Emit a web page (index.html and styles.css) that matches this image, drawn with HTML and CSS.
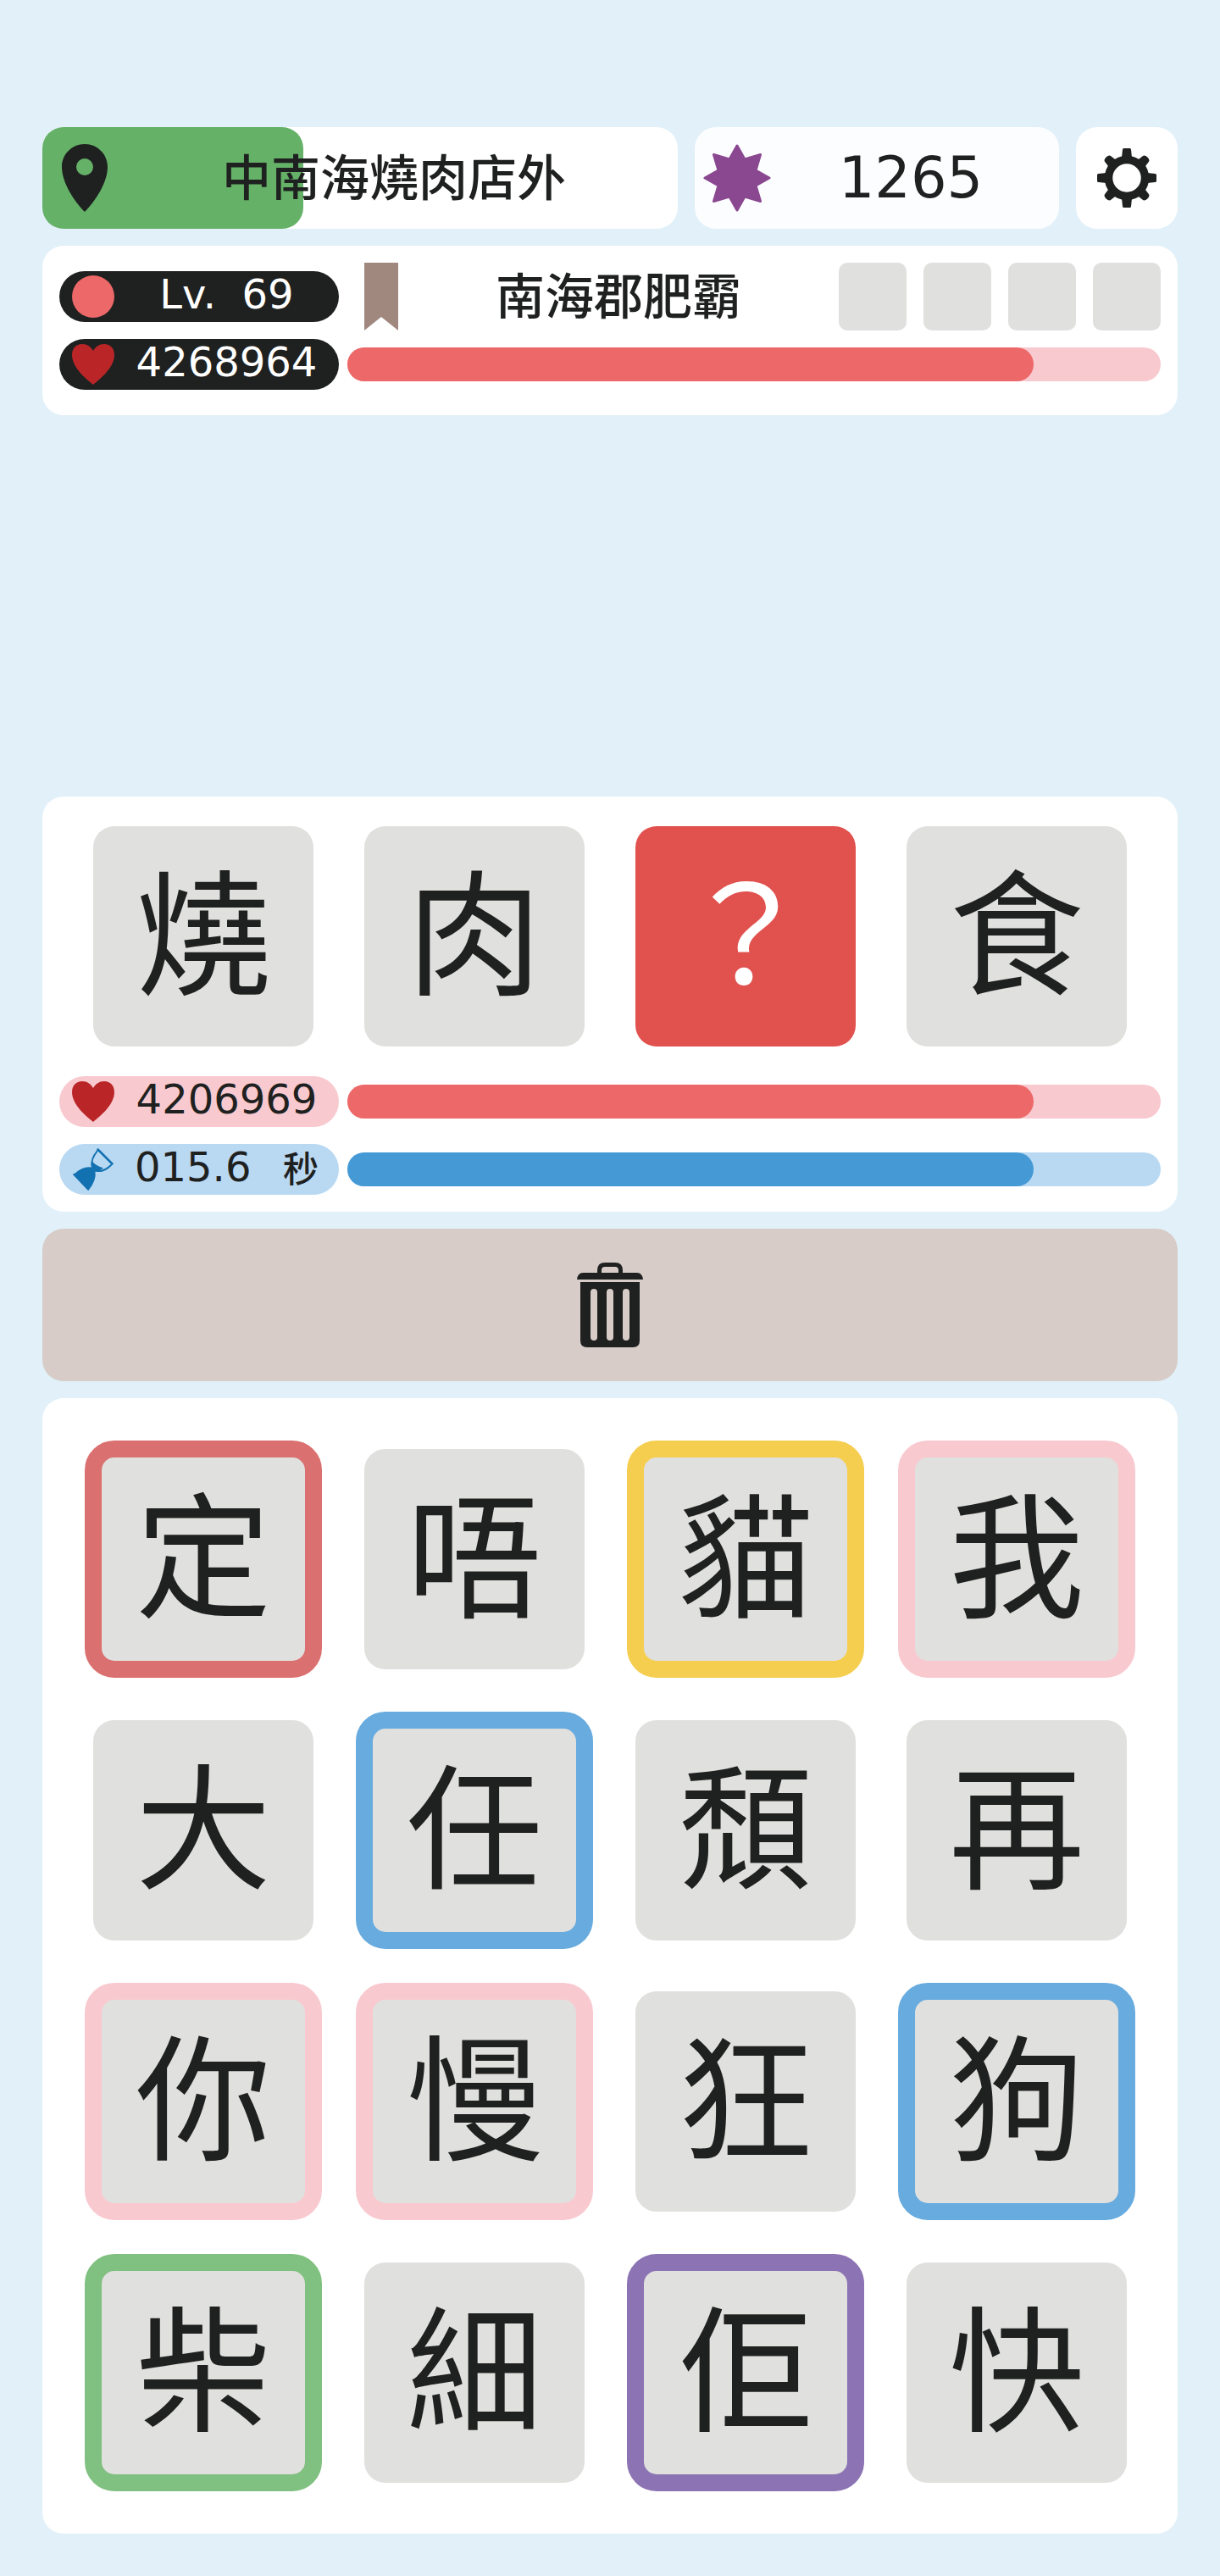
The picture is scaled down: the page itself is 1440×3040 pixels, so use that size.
FILE: index.html
```html
<!DOCTYPE html>
<html lang="zh-Hant">
<head>
<meta charset="utf-8">
<meta name="viewport" content="width=device-width, initial-scale=1">
<title>中南海燒肉店外</title>
<link rel="stylesheet" href="styles.css">
</head>
<body>
<main class="game">
  <header class="topbar">
    <div class="panel place">
      <div class="place-fill" style="width: 41%"></div>
      <svg class="icon-lg" viewBox="0 0 80 80" aria-hidden="true"><path fill="#1f2120" fill-rule="evenodd" d="M40 0C55 0 67 12 67 27C67 45 53 67 40 80C27 67 13 45 13 27C13 12 25 0 40 0ZM40 17A10 10 0 1 0 40 37A10 10 0 1 0 40 17Z"/></svg>
      <h1 class="title">中南海燒肉店外</h1>
    </div>
    <div class="panel score">
      <svg class="icon-lg" viewBox="0 0 80 80" aria-hidden="true"><path fill="#8a4890" stroke="#8a4890" stroke-width="3" stroke-linejoin="round" d="M40 2L49 18L67.500 12.500L62 31L78 40L62 49L67.500 67.500L49 62L40 78L31 62L12.500 67.500L18 49L2 40L18 31L12.500 12.500L31 18Z"/></svg>
      <span class="points">1265</span>
    </div>
    <button class="panel settings" type="button" aria-label="設定">
      <svg class="icon-gear" viewBox="-35 -35 70 70" aria-hidden="true">
        <circle r="21.500" fill="none" stroke="#1f2120" stroke-width="9.500"/>
        <g fill="#1f2120">
          <path id="tooth" d="M-6 -24L-5 -33.500Q-5 -35 -3.500 -35H3.500Q5 -35 5 -33.500L6 -24Z"/>
          <use href="#tooth" transform="rotate(90)"/><use href="#tooth" transform="rotate(180)"/><use href="#tooth" transform="rotate(270)"/>
          <path id="knob" d="M-6 -23L-5 -31Q-5 -34.500 0 -34.500Q5 -34.500 5 -31L6 -23Z" transform="rotate(45)"/>
          <use href="#knob" transform="rotate(90)"/><use href="#knob" transform="rotate(180)"/><use href="#knob" transform="rotate(270)"/>
        </g>
      </svg>
    </button>
  </header>

  <section class="panel enemy">
    <div class="enemy-head">
      <div class="pill pill-dark">
        <svg class="icon-sm" viewBox="0 0 50 50" aria-hidden="true"><circle cx="25" cy="25" r="25" fill="#ed6868"/></svg>
        <span class="value">Lv.&nbsp;&nbsp;69</span>
      </div>
      <svg class="bookmark" viewBox="0 0 40 80" aria-hidden="true"><path fill="#a1887f" d="M0 0H40V80L20 64L0 80Z"/></svg>
      <h2 class="title">南海郡肥霸</h2>
      <div class="slots"><span class="slot"></span><span class="slot"></span><span class="slot"></span><span class="slot"></span></div>
    </div>
    <div class="stat">
      <div class="pill pill-dark">
        <svg class="icon-sm" viewBox="0 0 50 50" aria-hidden="true"><path fill="#ba2628" d="M25 49C16 42 0 28 0 14C0 6 5 1 12 1C18 1 22 4 25 9C28 4 32 1 38 1C45 1 50 6 50 14C50 28 34 42 25 49Z"/></svg>
        <span class="value">4268964</span>
      </div>
      <div class="bar bar-life"><div class="bar-fill" style="width: 84.4%"></div></div>
    </div>
  </section>

  <div class="field"></div>

  <section class="panel player">
    <div class="word">
      <div class="tile">燒</div>
      <div class="tile">肉</div>
      <div class="tile tile-blank">？</div>
      <div class="tile">食</div>
    </div>
    <div class="stat">
      <div class="pill pill-life">
        <svg class="icon-sm" viewBox="0 0 50 50" aria-hidden="true"><path fill="#ba2628" d="M25 49C16 42 0 28 0 14C0 6 5 1 12 1C18 1 22 4 25 9C28 4 32 1 38 1C45 1 50 6 50 14C50 28 34 42 25 49Z"/></svg>
        <span class="value">4206969</span>
      </div>
      <div class="bar bar-life"><div class="bar-fill" style="width: 84.4%"></div></div>
    </div>
    <div class="stat">
      <div class="pill pill-time">
        <svg class="icon-sm" viewBox="0 0 50 50" aria-hidden="true">
          <g fill="none" stroke="#1271b1" stroke-width="2" stroke-linecap="round">
            <path stroke-width="2.500" d="M30.500 1.500L47.500 18.500M2.500 31L19 48.500"/>
            <path d="M30 3Q22 13 23.500 21M46 20Q37 29 28 26.500"/>
          </g>
          <path fill="#1271b1" d="M24 15.500Q27 20 37 23.500Q32 27.500 27.500 27.500Q29 38 20 49L2 31Q12 21 23 22.500Q22 19 24 15.500Z"/>
        </svg>
        <span class="value value-time"><span>015.6</span><span class="unit">秒</span></span>
      </div>
      <div class="bar bar-time"><div class="bar-fill" style="width: 84.4%"></div></div>
    </div>
  </section>

  <button class="trash" type="button" aria-label="清除">
    <svg class="icon-trash" viewBox="0 0 100 100" aria-hidden="true">
      <path fill="none" stroke="#1f2120" stroke-width="5" d="M37.500 14V9Q37.500 2.500 44 2.500H56Q62.500 2.500 62.500 9V14"/>
      <path fill="#1f2120" d="M11 20Q12 12 18 12H82Q88 12 89 20Z"/>
      <path fill="#1f2120" fill-rule="evenodd" d="M15 23H85V92Q85 100 77 100H23Q15 100 15 92ZM27 35V88A4 4 0 0 0 35 88V35A4 4 0 0 0 27 35ZM46 35V88A4 4 0 0 0 54 88V35A4 4 0 0 0 46 35ZM65 35V88A4 4 0 0 0 73 88V35A4 4 0 0 0 65 35Z"/>
    </svg>
  </button>

  <section class="panel board">
    <button type="button" class="tile key key-red">定</button>
    <button type="button" class="tile key">唔</button>
    <button type="button" class="tile key key-yellow">貓</button>
    <button type="button" class="tile key key-pink">我</button>
    <button type="button" class="tile key">大</button>
    <button type="button" class="tile key key-blue">任</button>
    <button type="button" class="tile key">頹</button>
    <button type="button" class="tile key">再</button>
    <button type="button" class="tile key key-pink">你</button>
    <button type="button" class="tile key key-pink">慢</button>
    <button type="button" class="tile key">狂</button>
    <button type="button" class="tile key key-blue">狗</button>
    <button type="button" class="tile key key-green">柴</button>
    <button type="button" class="tile key">細</button>
    <button type="button" class="tile key key-purple">佢</button>
    <button type="button" class="tile key">快</button>
  </section>
</main>
</body>
</html>
```
FILE: styles.css
```css
* {
  box-sizing: border-box;
}

body {
  margin: 0;
  background: #e1f0f9;
  color: #1f2120;
  font-family: "DejaVu Sans", "Noto Sans CJK TC", sans-serif;
}

button {
  border: 0;
  padding: 0;
  color: inherit;
  font: inherit;
  cursor: pointer;
}

svg {
  display: block;
  flex: none;
}

.game {
  display: flex;
  flex-direction: column;
  gap: 20px;
  min-height: 100vh;
  padding: 150px 50px 50px;
}

.panel {
  border-radius: 25px;
  background: #fff;
}

.title {
  flex: 1;
  margin: 0;
  padding-bottom: 8px;
  font-family: "Noto Sans CJK TC", sans-serif;
  font-size: 58px;
  font-weight: 500;
  line-height: 72px;
  text-align: center;
  white-space: nowrap;
}

.icon-lg {
  width: 80px;
  height: 80px;
}

.icon-sm {
  width: 50px;
  height: 50px;
}

/* Top bar */

.topbar {
  display: flex;
  gap: 20px;
}

.place,
.score {
  display: flex;
  align-items: center;
  height: 120px;
  padding: 0 10px;
}

.place {
  position: relative;
  flex: 73;
}

.place-fill {
  position: absolute;
  inset: 0 auto 0 0;
  border-radius: 25px;
  background: #65b168;
}

.place > svg,
.place > .title {
  position: relative;
}

.score {
  flex: 41;
  background: #fcfdff;
}

.points {
  flex: 1;
  font-size: 67px;
  line-height: 80px;
  text-align: center;
}

.settings {
  display: flex;
  align-items: center;
  justify-content: center;
  width: 120px;
  height: 120px;
}

.icon-gear {
  width: 70px;
  height: 70px;
}

/* Stats */

.enemy {
  display: flex;
  flex-direction: column;
  gap: 10px;
  padding: 20px 20px 30px;
}

.enemy-head {
  display: flex;
  align-items: center;
}

.bookmark {
  width: 40px;
  height: 80px;
  margin-left: 30px;
}

.slots {
  display: flex;
  gap: 20px;
}

.slot {
  width: 80px;
  height: 80px;
  border-radius: 10px;
  background: #e0e0de;
}

.stat {
  display: flex;
  align-items: center;
  gap: 10px;
}

.pill {
  display: flex;
  flex: none;
  align-items: center;
  width: 330px;
  height: 60px;
  padding-left: 15px;
  border-radius: 30px;
}

.pill-dark {
  background: #1f2120;
  color: #fff;
}

.pill-life {
  background: #f8c9cf;
}

.pill-time {
  background: #b9d8f2;
}

.value {
  flex: 1;
  padding-bottom: 6px;
  font-size: 48px;
  line-height: 54px;
  text-align: center;
  white-space: nowrap;
}

.value-time {
  display: flex;
  justify-content: space-between;
  padding: 0 24px 6px;
}

.unit {
  font-family: "Noto Sans CJK TC", sans-serif;
  font-size: 42px;
  font-weight: 500;
}

.bar {
  flex: 1;
  height: 40px;
  border-radius: 20px;
}

.bar-fill {
  height: 100%;
  border-radius: 20px;
}

.bar-life {
  background: #f8c9cf;
}

.bar-life .bar-fill {
  background: #ed6868;
}

.bar-time {
  background: #b9d8f2;
}

.bar-time .bar-fill {
  background: #459ad6;
}

.field {
  flex: 1;
  min-height: 200px;
}

/* Word being completed */

.player {
  display: flex;
  flex-direction: column;
  gap: 20px;
  padding: 35px 20px 20px;
}

.word {
  display: grid;
  grid-template-columns: repeat(4, 1fr);
  gap: 60px;
  padding: 0 40px 15px;
}

.tile {
  display: flex;
  align-items: center;
  justify-content: center;
  aspect-ratio: 1;
  padding-bottom: 26px;
  border-radius: 25px;
  background: #e0e0de;
  font-family: "Noto Sans CJK TC", sans-serif;
  font-size: 160px;
  line-height: 1;
}

.tile-blank {
  background: #e1514d;
  color: #fff;
}

/* Discard */

.trash {
  display: flex;
  align-items: center;
  justify-content: center;
  height: 180px;
  border-radius: 25px;
  background: #d7ccc8;
}

.icon-trash {
  width: 100px;
  height: 100px;
}

/* Character board */

.board {
  display: grid;
  grid-template-columns: repeat(4, 1fr);
  gap: 40px;
  padding: 50px;
}

.key {
  border: 10px solid #fff;
  border-radius: 35px;
}

.key-red,
.key-yellow,
.key-pink,
.key-blue,
.key-green,
.key-purple {
  border-width: 20px;
}

.key-red {
  border-color: #db7070;
}

.key-yellow {
  border-color: #f5ce50;
}

.key-pink {
  border-color: #f9c9d0;
}

.key-blue {
  border-color: #67abdf;
}

.key-green {
  border-color: #80c080;
}

.key-purple {
  border-color: #8c73b3;
}
```
